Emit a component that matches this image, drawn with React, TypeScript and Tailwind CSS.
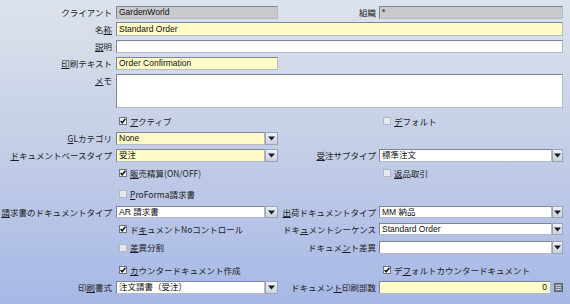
import React from "react";

const JP = "font-['Noto_Sans_CJK_JP','Liberation_Sans',sans-serif]";
const LT = "font-['Liberation_Sans','Noto_Sans_CJK_JP',sans-serif]";

function U({ children }: { children: React.ReactNode }) {
  return <span className="underline underline-offset-[1px]">{children}</span>;
}

function Label({ children, w = "w-[116px]", pr = "pr-[4px]" }: { children?: React.ReactNode; w?: string; pr?: string }) {
  return (
    <div className={`${w} ${pr} shrink-0 flex items-center justify-end whitespace-nowrap text-[8.5px] leading-none text-[#1c1c22] ${JP}`}>
      {children}
    </div>
  );
}

function Field({ w, bg, children, right }: { w: string; bg: string; children?: React.ReactNode; right?: boolean }) {
  return (
    <div
      className={`${w} ${bg} h-full shrink-0 border border-t-[#7d8596] border-l-[#7d8596] border-r-[#b4bac6] border-b-[#b4bac6] flex items-center ${right ? "justify-end pr-[3px]" : "pl-[2px]"} overflow-hidden whitespace-nowrap text-[8.5px] leading-none text-[#111] ${LT}`}
    >
      {children}
    </div>
  );
}

function DropBtn({ w = "w-[12px]" }: { w?: string }) {
  return (
    <div className={`${w} h-full shrink-0 border border-[#9aa3b6] bg-gradient-to-b from-[#eef1f7] to-[#c9d1e2] flex items-center justify-center`}>
      <svg width="7" height="5" viewBox="0 0 7 5">
        <path d="M0 0.5 H7 L3.5 4.5 Z" fill="#1a1a1a" />
      </svg>
    </div>
  );
}

function Select({ w, bg, children, btn }: { w: string; bg: string; children?: React.ReactNode; btn?: string }) {
  return (
    <div className="flex h-full shrink-0">
      <Field w={w} bg={bg}>{children}</Field>
      <DropBtn w={btn} />
    </div>
  );
}

function Check({ checked, label, ml = "ml-[3px]" }: { checked?: boolean; label: React.ReactNode; ml?: string }) {
  return (
    <div className={`${ml} flex items-center gap-[3px] whitespace-nowrap`}>
      <span
        className={`w-[8px] h-[8px] shrink-0 flex items-center justify-center border ${checked ? "border-[#6e7686] bg-[#f6f6f6]" : "border-[#b1b6c0] bg-[#e6e8ec]"}`}
      >
        {checked && (
          <svg width="6" height="6" viewBox="0 0 6 6">
            <path d="M0.6 3 L2.2 4.8 L5.5 0.8" stroke="#111" strokeWidth="1.4" fill="none" />
          </svg>
        )}
      </span>
      <span className={`text-[8.5px] leading-none text-[#1c1c22] ${JP}`}>{label}</span>
    </div>
  );
}

function Row({ mt, h, children }: { mt: string; h: string; children: React.ReactNode }) {
  return <div className={`flex ${mt} ${h}`}>{children}</div>;
}

export default function App() {
  return (
    <div className="w-[570px] h-[304px] overflow-hidden bg-gradient-to-b from-[#dde3ec] via-[#c3cde6] to-[#a6b8e6] flex flex-col">
      <Row mt="mt-[6px]" h="h-[13px]">
        <Label>クライアント</Label>
        <Field w="w-[162px]" bg="bg-[#c9c9ca]">GardenWorld</Field>
        <Label w="w-[101px]" pr="pr-[3px]">組織</Label>
        <Field w="w-[184px]" bg="bg-[#c9c9ca]">*</Field>
      </Row>
      <Row mt="mt-[3px]" h="h-[14px]">
        <Label>名<U>称</U></Label>
        <Field w="w-[447px]" bg="bg-[#fffcc8]">Standard Order</Field>
      </Row>
      <Row mt="mt-[4px]" h="h-[13px]">
        <Label><U>説</U>明</Label>
        <Field w="w-[447px]" bg="bg-white" />
      </Row>
      <Row mt="mt-[4px]" h="h-[13px]">
        <Label><U>印</U>刷テキスト</Label>
        <Field w="w-[162px]" bg="bg-[#fffcc8]">Order Confirmation</Field>
      </Row>
      <div className="flex mt-[4px] h-[34px]">
        <div className={`w-[116px] pr-[4px] pt-[2px] shrink-0 flex justify-end text-[8.5px] leading-none text-[#1c1c22] ${JP}`}>
          <span><U>メ</U>モ</span>
        </div>
        <Field w="w-[447px]" bg="bg-white" />
      </div>
      <Row mt="mt-[7px]" h="h-[12px]">
        <div className="w-[116px] shrink-0" />
        <div className="w-[263px] shrink-0 flex items-center">
          <Check checked label={<><U>ア</U>クティブ</>} />
        </div>
        <div className="flex items-center">
          <Check ml="ml-[4px]" label={<><U>デ</U>フォルト</>} />
        </div>
      </Row>
      <Row mt="mt-[5px]" h="h-[13px]">
        <Label><U>G</U>Lカテゴリ</Label>
        <Select w="w-[149px]" bg="bg-[#fffcc8]" btn="w-[13px]">None</Select>
      </Row>
      <Row mt="mt-[4px]" h="h-[13px]">
        <Label><U>ド</U>キュメントベースタイプ</Label>
        <Select w="w-[149px]" bg="bg-[#fffcc8]" btn="w-[13px]">受注</Select>
        <Label w="w-[101px]" pr="pr-[3px]"><U>受</U>注サブタイプ</Label>
        <Select w="w-[173px]" bg="bg-white" btn="w-[11px]">標準注文</Select>
      </Row>
      <Row mt="mt-[5px]" h="h-[12px]">
        <div className="w-[116px] shrink-0" />
        <div className="w-[263px] shrink-0 flex items-center">
          <Check checked label={<><U>販</U>売精算(ON/OFF)</>} />
        </div>
        <div className="flex items-center">
          <Check ml="ml-[4px]" label={<><U>返</U>品取引</>} />
        </div>
      </Row>
      <Row mt="mt-[9px]" h="h-[12px]">
        <div className="w-[116px] shrink-0" />
        <div className="flex items-center">
          <Check label={<><U>P</U>roForma請求書</>} />
        </div>
      </Row>
      <Row mt="mt-[6px]" h="h-[12px]">
        <Label><U>請</U>求書のドキュメントタイプ</Label>
        <Select w="w-[149px]" bg="bg-white" btn="w-[13px]">AR 請求書</Select>
        <Label w="w-[101px]" pr="pr-[3px]"><U>出</U>荷ドキュメントタイプ</Label>
        <Select w="w-[173px]" bg="bg-white" btn="w-[11px]">MM 納品</Select>
      </Row>
      <Row mt="mt-[5px]" h="h-[12px]">
        <div className="w-[116px] shrink-0" />
        <div className="w-[162px] shrink-0 flex items-center">
          <Check checked label={<>ド<U>キ</U>ュメントNoコントロール</>} />
        </div>
        <Label w="w-[101px]" pr="pr-[3px]">ドキ<U>ュ</U>メントシーケンス</Label>
        <Select w="w-[173px]" bg="bg-white" btn="w-[11px]">Standard Order</Select>
      </Row>
      <Row mt="mt-[6px]" h="h-[13px]">
        <div className="w-[116px] shrink-0" />
        <div className="w-[162px] shrink-0 flex items-center">
          <Check label={<><U>差</U>異分割</>} />
        </div>
        <Label w="w-[101px]" pr="pr-[3px]">ドキュメ<U>ン</U>ト差異</Label>
        <Select w="w-[173px]" bg="bg-white" btn="w-[11px]" />
      </Row>
      <Row mt="mt-[10px]" h="h-[12px]">
        <div className="w-[116px] shrink-0" />
        <div className="w-[263px] shrink-0 flex items-center">
          <Check checked label={<><U>カ</U>ウンタードキュメント作成</>} />
        </div>
        <div className="flex items-center">
          <Check checked ml="ml-[4px]" label={<>デ<U>フ</U>ォルトカウンタードキュメント</>} />
        </div>
      </Row>
      <Row mt="mt-[5px]" h="h-[13px]">
        <Label>印<U>刷</U>書式</Label>
        <Select w="w-[149px]" bg="bg-white" btn="w-[13px]">注文請書（受注）</Select>
        <Label w="w-[101px]" pr="pr-[3px]">ドキュメン<U>ト</U>印刷部数</Label>
        <div className="flex h-full">
          <Field w="w-[172px]" bg="bg-[#fffcc8]" right>0</Field>
          <div className="ml-[2px] w-[10px] h-full flex items-center justify-center">
            <div className="w-[9px] h-[9px] bg-[#7c8494] border border-[#5c6372] flex flex-col justify-center gap-[1px] px-[1px]">
              <div className="h-[1px] bg-[#c4cad6]" />
              <div className="h-[1px] bg-[#c4cad6]" />
              <div className="h-[1px] bg-[#c4cad6]" />
            </div>
          </div>
        </div>
      </Row>
    </div>
  );
}
